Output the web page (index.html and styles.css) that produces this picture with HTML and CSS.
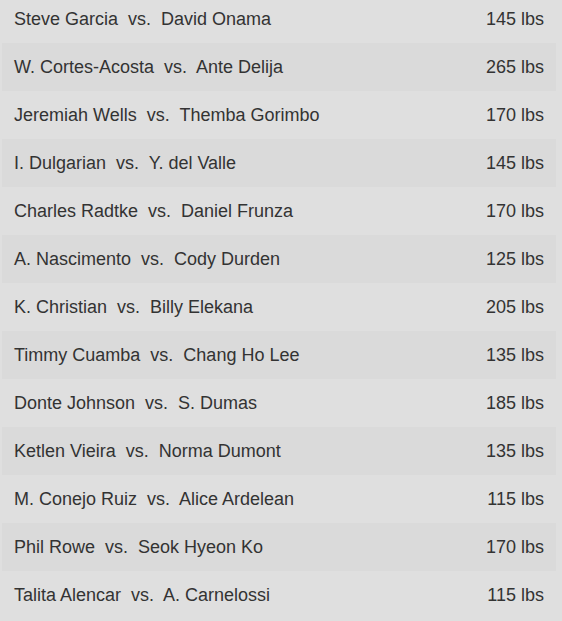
FILE: index.html
```html
<!DOCTYPE html>
<html>
<head>
<meta charset="utf-8">
<link rel="stylesheet" href="styles.css">
</head>
<body>
<div class="fights">
  <div class="row"><span class="names">Steve Garcia&nbsp; vs.&nbsp; David Onama</span><span class="weight">145 lbs</span></div>
  <div class="row"><span class="names">W. Cortes-Acosta&nbsp; vs.&nbsp; Ante Delija</span><span class="weight">265 lbs</span></div>
  <div class="row"><span class="names">Jeremiah Wells&nbsp; vs.&nbsp; Themba Gorimbo</span><span class="weight">170 lbs</span></div>
  <div class="row"><span class="names">I. Dulgarian&nbsp; vs.&nbsp; Y. del Valle</span><span class="weight">145 lbs</span></div>
  <div class="row"><span class="names">Charles Radtke&nbsp; vs.&nbsp; Daniel Frunza</span><span class="weight">170 lbs</span></div>
  <div class="row"><span class="names">A. Nascimento&nbsp; vs.&nbsp; Cody Durden</span><span class="weight">125 lbs</span></div>
  <div class="row"><span class="names">K. Christian&nbsp; vs.&nbsp; Billy Elekana</span><span class="weight">205 lbs</span></div>
  <div class="row"><span class="names">Timmy Cuamba&nbsp; vs.&nbsp; Chang Ho Lee</span><span class="weight">135 lbs</span></div>
  <div class="row"><span class="names">Donte Johnson&nbsp; vs.&nbsp; S. Dumas</span><span class="weight">185 lbs</span></div>
  <div class="row"><span class="names">Ketlen Vieira&nbsp; vs.&nbsp; Norma Dumont</span><span class="weight">135 lbs</span></div>
  <div class="row"><span class="names">M. Conejo Ruiz&nbsp; vs.&nbsp; Alice Ardelean</span><span class="weight">115 lbs</span></div>
  <div class="row"><span class="names">Phil Rowe&nbsp; vs.&nbsp; Seok Hyeon Ko</span><span class="weight">170 lbs</span></div>
  <div class="row"><span class="names">Talita Alencar&nbsp; vs.&nbsp; A. Carnelossi</span><span class="weight">115 lbs</span></div>
</div>
</body>
</html>
```
FILE: styles.css
```css
html, body {
  margin: 0;
  padding: 0;
  background: #dfdfdf;
}
body {
  font-family: "Liberation Sans", Arial, sans-serif;
  color: #333;
  overflow: hidden;
}
.fights {
  display: flex;
  flex-direction: column;
  margin: -5px 6px 0 2px;
}
.row {
  height: 48px;
  display: flex;
  align-items: center;
  justify-content: space-between;
  padding: 0 12px;
  font-size: 18px;
}
.row:nth-child(even) {
  background: #dadada;
}
```
